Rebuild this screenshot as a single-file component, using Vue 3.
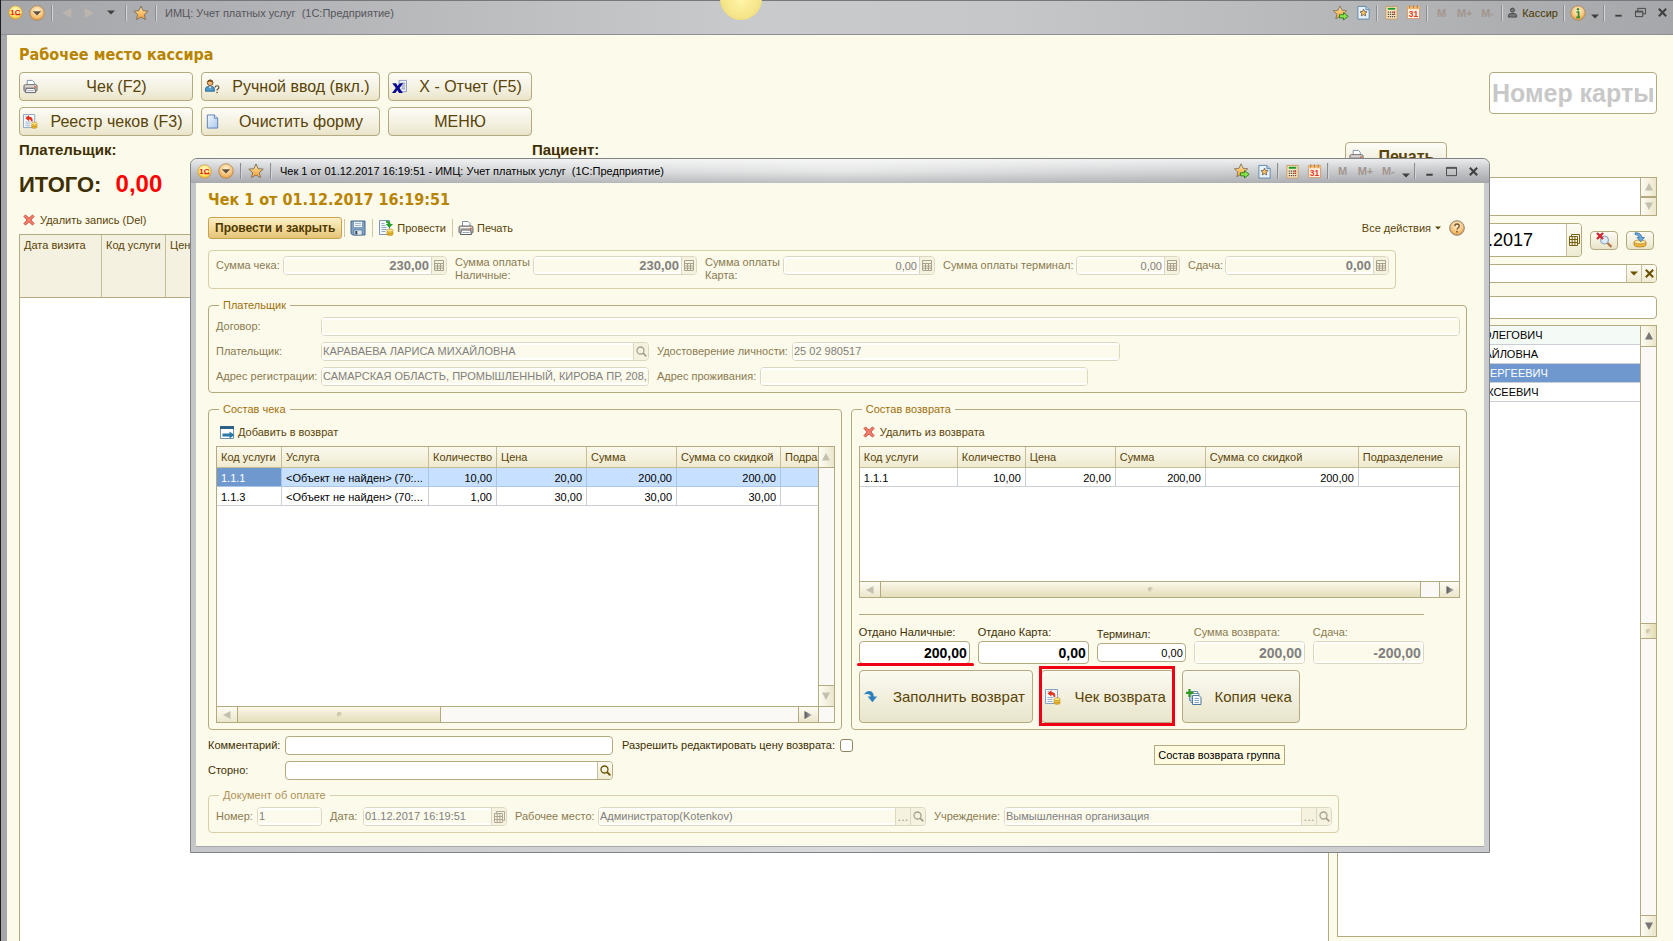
<script setup>
import { ref } from 'vue'

const mainButtons = [
  { icon: 'printer', text: 'Чек (F2)' },
  { icon: 'person', text: 'Ручной ввод (вкл.)' },
  { icon: 'xls', text: 'Х - Отчет (F5)' },
  { icon: 'registry', text: 'Реестр чеков (F3)' },
  { icon: 'blank', text: 'Очистить форму' },
  { icon: '', text: 'МЕНЮ' },
]

const visitColumns = [
  { name: 'Дата визита', width: 82 },
  { name: 'Код услуги', width: 64 },
  { name: 'Цена', width: 90 },
  { name: '', width: null },
]

const people = [
  { name: 'ОЛЕГОВИЧ', indent: 145, state: 'first' },
  { name: 'МИХАЙЛОВНА', indent: 122, state: '' },
  { name: 'СЕРГЕЕВИЧ', indent: 144, state: 'active' },
  { name: 'АЛЕКСЕЕВИЧ', indent: 127, state: '' },
]

const sums = [
  { id: 'sum-check', label: ['Сумма чека:'], value: '230,00', bold: true },
  { id: 'sum-cash', label: ['Сумма оплаты', 'Наличные:'], value: '230,00', bold: true },
  { id: 'sum-card', label: ['Сумма оплаты', 'Карта:'], value: '0,00', bold: false },
  { id: 'sum-term', label: ['Сумма оплаты терминал:'], value: '0,00', bold: false },
  { id: 'sum-change', label: ['Сдача:'], value: '0,00', bold: true },
]

const checkTable = {
  columns: [
    { name: 'Код услуги', width: 65 },
    { name: 'Услуга', width: 147 },
    { name: 'Количество', width: 68, num: true },
    { name: 'Цена', width: 90, num: true },
    { name: 'Сумма', width: 90, num: true },
    { name: 'Сумма со скидкой', width: 104, num: true },
    { name: 'Подразделение', width: null },
  ],
  rows: [
    ['1.1.1', '<Объект не найден> (70:...', '10,00', '20,00', '200,00', '200,00', ''],
    ['1.1.3', '<Объект не найден> (70:...', '1,00', '30,00', '30,00', '30,00', ''],
  ],
}

const returnTable = {
  columns: [
    { name: 'Код услуги', width: 98 },
    { name: 'Количество', width: 68, num: true },
    { name: 'Цена', width: 90, num: true },
    { name: 'Сумма', width: 90, num: true },
    { name: 'Сумма со скидкой', width: 153, num: true },
    { name: 'Подразделение', width: null },
  ],
  rows: [['1.1.1', '10,00', '20,00', '200,00', '200,00', '']],
}

const payments = [
  { id: 'pay-cash', label: 'Отдано Наличные:', value: '200,00', marked: true },
  { id: 'pay-card', label: 'Отдано Карта:', value: '0,00' },
  { id: 'pay-term', label: 'Терминал:', value: '0,00', small: true },
  { id: 'pay-return', label: 'Сумма возврата:', value: '200,00', disabled: true },
  { id: 'pay-change', label: 'Сдача:', value: '-200,00', disabled: true },
]

const comment = ref('')
const storno = ref('')
const allowEdit = ref(false)
const colStyle = (c) => (c.width ? { width: c.width + 'px' } : null)
</script>

<template>
  <div class="app">
    <svg class="defs" aria-hidden="true">
      <defs>
        <radialGradient id="gOrange" cx="50%" cy="35%" r="65%">
          <stop offset="0" stop-color="#fff3dc" /><stop offset="0.6" stop-color="#f8c880" /><stop offset="1" stop-color="#e79a3c" />
        </radialGradient>
        <radialGradient id="gYellow" cx="50%" cy="35%" r="65%">
          <stop offset="0" stop-color="#fffbd0" /><stop offset="0.7" stop-color="#fde35a" /><stop offset="1" stop-color="#eba92c" />
        </radialGradient>
        <linearGradient id="gStar" x1="0" y1="0" x2="0" y2="1">
          <stop offset="0" stop-color="#ffe9b0" /><stop offset="1" stop-color="#f59a28" />
        </linearGradient>
        <linearGradient id="gPage" x1="0" y1="0" x2="1" y2="1">
          <stop offset="0" stop-color="#f4f9ff" /><stop offset="1" stop-color="#a9c8ee" />
        </linearGradient>
        <linearGradient id="gArrow" x1="0" y1="0" x2="1" y2="0">
          <stop offset="0" stop-color="#555" /><stop offset="1" stop-color="#bbb" />
        </linearGradient>
        <symbol id="logo" viewBox="0 0 16 16">
          <circle cx="8" cy="8" r="7.2" fill="url(#gYellow)" stroke="#c9955a" stroke-width="0.8" />
          <text x="7.8" y="11" text-anchor="middle" font-family="Liberation Sans, sans-serif" font-weight="bold" font-size="8.5" fill="#e0201a">1C</text>
          <path d="M8 10.3h5.2" stroke="#e0201a" stroke-width="1.2" />
        </symbol>
        <symbol id="drop" viewBox="0 0 16 16">
          <circle cx="8" cy="8" r="7.3" fill="url(#gOrange)" stroke="#a8845c" stroke-width="0.8" />
          <path d="M3.8 6.2h8.4L8 10.6z" fill="#5f5040" />
        </symbol>
        <symbol id="star" viewBox="0 0 16 16">
          <path d="M8 1l2.1 4.7 5.1.5-3.9 3.4 1.2 5L8 12l-4.5 2.6 1.2-5L.8 6.2l5.1-.5z" fill="url(#gStar)" stroke="#85765e" stroke-width="1" />
        </symbol>
        <symbol id="stargo" viewBox="0 0 16 16">
          <path d="M7 .8l2 4.5 4.8.5-3.6 3.2 1.1 4.8L7 11.4l-4.2 2.4 1.1-4.8L.3 5.8l4.8-.5z" fill="url(#gStar)" stroke="#85765e" stroke-width="0.9" />
          <path d="M6.5 9.7h4V7.6l4.700 3.700-4.700 3.700v-2.100h-4z" fill="#8be04c" stroke="#2c7a1e" stroke-width="0.900" />
        </symbol>
        <symbol id="docstar" viewBox="0 0 16 16">
          <path d="M2 1.5h8.5L14 5v10H2z" fill="#e9f2fa" stroke="#5c87ac" />
          <path d="M10.5 1.5V5H14" fill="#b7cfe4" stroke="#5c87ac" />
          <path d="M8 4.4l1.1 2.5 2.7.3-2 1.8.6 2.7L8 10.3l-2.4 1.4.6-2.7-2-1.8 2.7-.3z" fill="#fbc15c" stroke="#5e5340" stroke-width="0.8" />
        </symbol>
        <symbol id="calc" viewBox="0 0 16 16">
          <path d="M2 1.5h12v13.500H2z" fill="#fbe6c2" stroke="#c79a62" />
          <path d="M4 4h8" stroke="#1b9a2a" stroke-width="2" />
          <path d="M4 7.500h8M4 10h8M4 12.500h8" stroke="#5d5044" stroke-width="1.300" stroke-dasharray="1.400 0.800" />
          <path d="M10.8 6.800v1.400M10.8 9.300v1.400" stroke="#d6251c" stroke-width="1.600" />
        </symbol>
        <symbol id="cal31" viewBox="0 0 16 16">
          <path d="M1.5 1.5h13v13h-13z" fill="#fdf1e0" stroke="#d09a6e" />
          <path d="M1.5 1.5h13v3h-13z" fill="#f5bb74" />
          <path d="M4 .5v3M8 .5v3M12 .5v3" stroke="#a87440" />
          <text x="8" y="13" text-anchor="middle" font-family="Liberation Sans, sans-serif" font-weight="bold" font-size="9" fill="#e8382a">31</text>
        </symbol>
        <symbol id="user" viewBox="0 0 12 12">
          <circle cx="6" cy="3.4" r="2.2" fill="#777" stroke="#444" />
          <path d="M1.5 11V9.2Q1.5 7.5 4 7.2h4q2.5.3 2.5 2V11z" fill="#777" stroke="#444" />
        </symbol>
        <symbol id="info" viewBox="0 0 16 16">
          <circle cx="8" cy="8" r="7.2" fill="url(#gOrange)" stroke="#a8845c" stroke-width="0.8" />
          <circle cx="8" cy="4.2" r="1.2" fill="#2f8c2a" />
          <path d="M6.5 7H8.6v5M6.3 12.3h3.8" stroke="#2f8c2a" stroke-width="1.7" fill="none" />
        </symbol>
        <symbol id="help" viewBox="0 0 16 16">
          <circle cx="8" cy="8" r="7.3" fill="url(#gOrange)" stroke="#8d8078" stroke-width="1" />
          <path d="M5.8 6.2q0-2.2 2.2-2.2t2.2 2Q10.200 7.200 9 8q-1 .6-1 1.500" stroke="#7a5630" stroke-width="1.400" fill="none" />
          <circle cx="8" cy="11.700" r="0.900" fill="#7a5630" />
        </symbol>
        <symbol id="printer" viewBox="0 0 16 16">
          <path d="M4.500 6V1.500h5.500l2 2V6" fill="#fff" stroke="#7b8fa6" />
          <path d="M1 7.500Q1 6 2.500 6h11Q15 6 15 7.500V12q0 1-1 1H2q-1 0-1-1z" fill="#bdb8b3" stroke="#6e6a68" />
          <path d="M2 7.500h12" stroke="#f3f1ee" />
          <path d="M3.500 10h9l1 4.500h-11z" fill="#fff" stroke="#5f5f66" />
          <path d="M4.500 12.500h7" stroke="#9ba6b4" />
          <path d="M12 8.500h1.500" stroke="#d94b2b" stroke-width="1.400" />
        </symbol>
        <symbol id="person" viewBox="0 0 16 16">
          <circle cx="5.500" cy="4" r="3" fill="#f3b877" stroke="#6b4421" />
          <path d="M2.800 3.300Q3 .8 5.600.8t2.800 2.700Q6 3.600 5 2.300q-.8 1-2.200 1z" fill="#7a4a1c" />
          <path d="M.5 13V10.500Q.5 8 4 8h3q3 0 3 2.500V13z" fill="#4f9ac9" stroke="#2d6894" />
          <path d="M4 8l1.500 2L7 8z" fill="#fff" />
          <path d="M10.800 9q0-1.800 2-1.800T14.800 9q0 1-1.100 1.700-.9.5-.9 1.500" stroke="#5b4a30" stroke-width="1.200" fill="none" />
          <circle cx="12.800" cy="14.300" r="0.800" fill="#5b4a30" />
        </symbol>
        <symbol id="xls" viewBox="0 0 16 16">
          <path d="M7.500 1.500h8v12h-8z" fill="#eef1fa" stroke="#8e96bd" />
          <path d="M10 4.500h4M10 6.500h4M10 8.500h4M10 10.500h4" stroke="#8289b2" />
          <path d="M.3 4.500h4l1.900 3 2-3H12L8 9.600l3.600 5.400H7.500l-1.800-3-2 3H0l4-5.400z" fill="#0a0a8c" />
        </symbol>
        <symbol id="registry" viewBox="0 0 16 16">
          <path d="M.5.5h12v14H.5z" fill="#f7fafd" stroke="#8aa3c0" />
          <path d="M2.500 8.500h6M2.500 10.500h5M2.500 12.500h5M2.500 2.500h2" stroke="#9eb4ce" />
          <path d="M2.500 4.400L6.500 1v2Q10.800 3.200 10.300 8H8.800Q8.800 5.800 6.500 5.600V7.600z" fill="#e3301c" />
          <ellipse cx="12" cy="13.800" rx="3.200" ry="1.500" fill="#e9b427" stroke="#b98a20" stroke-width="0.600" />
          <ellipse cx="12" cy="12" rx="3.200" ry="1.500" fill="#f2c83d" stroke="#b98a20" stroke-width="0.600" />
          <ellipse cx="12" cy="10.200" rx="3.200" ry="1.500" fill="#ffe67d" stroke="#b98a20" stroke-width="0.600" />
        </symbol>
        <symbol id="post" viewBox="0 0 16 16">
          <path d="M1.500.5h10v14h-10z" fill="#f5f8fc" stroke="#7d96b4" />
          <path d="M3.500 3.500h3M3.500 5.500h4M3.500 7.500h5M3.500 9.500h5M3.500 11.500h4" stroke="#8ea8c6" />
          <path d="M8 .8q4-.3 4.500 3.200H15l-3.700 4L7.700 4H10Q9.500 2.500 8 2.500z" fill="#23a02a" />
          <ellipse cx="12" cy="13.900" rx="3.200" ry="1.500" fill="#e9b427" stroke="#b98a20" stroke-width="0.600" />
          <ellipse cx="12" cy="12.200" rx="3.200" ry="1.500" fill="#f2c83d" stroke="#b98a20" stroke-width="0.600" />
          <ellipse cx="12" cy="10.500" rx="3.200" ry="1.500" fill="#ffe67d" stroke="#b98a20" stroke-width="0.600" />
        </symbol>
        <symbol id="blank" viewBox="0 0 16 16">
          <path d="M2.500 1h7.500l3.500 3.500V15h-11z" fill="url(#gPage)" stroke="#5b7fb5" />
          <path d="M10 1v3.500h3.500" fill="#dfeafa" stroke="#5b7fb5" />
        </symbol>
        <symbol id="cross" viewBox="0 0 12 12">
          <path d="M1 2.500L2.500 1 6 4.300 9.500 1 11 2.500 7.800 6 11 9.500 9.500 11 6 7.800 2.500 11 1 9.500 4.200 6z" fill="#f4836f" stroke="#cf4538" />
        </symbol>
        <symbol id="floppy" viewBox="0 0 16 16">
          <path d="M1 1h14v14H2.500L1 13.500z" fill="#7fa3c4" stroke="#47698c" />
          <path d="M3.500 1.500h9v6h-9z" fill="#eef4f9" stroke="#5b7f9f" stroke-width="0.600" />
          <path d="M5 3.500h6M5 5.500h6" stroke="#9fb8cc" />
          <path d="M4 10h8v5H4z" fill="#e3e8ec" stroke="#47698c" stroke-width="0.600" />
          <path d="M5.300 11h2v3.500h-2z" fill="#2f4a66" />
        </symbol>
        <symbol id="addret" viewBox="0 0 16 16">
          <path d="M1.500 2.500h13v12h-13z" fill="#fff" stroke="#7492a8" />
          <path d="M1 2h14v3H1z" fill="#2c6184" />
          <path d="M3.500 9.500h7V7.500l5 3.500-5 3.500v-2h-7z" fill="#2b79a6" />
        </symbol>
        <symbol id="minicalc" viewBox="0 0 10 11">
          <path d="M.5.5h9v10h-9zM.5 3.500h9M.5 6h9M.5 8.200h9M3.500 3.500v7M6.500 3.500v7" fill="none" stroke="currentColor" />
        </symbol>
        <symbol id="minical" viewBox="0 0 11 12">
          <path d="M2.500 2V.5h8v9H9M.5 2.500h8v9h-8zM.5 5.500h8M.5 8.500h8M3.200 2.500v9M5.900 2.500v9" fill="none" stroke="currentColor" stroke-width="0.900" />
        </symbol>
        <symbol id="lens" viewBox="0 0 11 11">
          <circle cx="4.500" cy="4.500" r="3.500" fill="none" stroke="currentColor" stroke-width="1.300" />
          <path d="M7 7l3.300 3.300" stroke="currentColor" stroke-width="1.800" />
        </symbol>
        <symbol id="lensx" viewBox="0 0 16 16">
          <circle cx="8.500" cy="8" r="4" fill="#dcebf8" stroke="#8a9bb0" />
          <path d="M11.500 11l4 4" stroke="#b5764e" stroke-width="2.400" />
          <path d="M1 1l6 6M7 1L1 7" stroke="#d3202a" stroke-width="2.200" />
        </symbol>
        <symbol id="opendb" viewBox="0 0 16 16">
          <path d="M2 10v3q0 2 6 2t6-2v-3z" fill="#efb83c" stroke="#a87a22" stroke-width="0.700" />
          <ellipse cx="8" cy="10" rx="6" ry="2" fill="#ffe9a0" stroke="#a87a22" stroke-width="0.700" />
          <path d="M3 .8q6-.6 7 4.700h2.500L8.800 9.800 5 5.500h2.300Q6.500 2.500 3 2.500z" fill="#69a9dd" stroke="#2a6399" stroke-width="0.700" />
        </symbol>
        <symbol id="fill" viewBox="0 0 16 16">
          <path d="M1 5.500Q5 .2 9.500 3q2 1.500 2 5H15l-5 6-5-6h3.200Q8.300 4.300 1 5.500z" fill="#2d7fbe" />
        </symbol>
        <symbol id="copyplus" viewBox="0 0 16 16">
          <path d="M3.500 2.500h8v9h-8z" fill="#fff" stroke="#6d8fae" />
          <path d="M5 4.500h8v9H5z" fill="#fff" stroke="#6d8fae" />
          <path d="M6.500 6.500H13l2 2v7H6.500z" fill="#f4f8fc" stroke="#52789a" />
          <path d="M8.500 9.500H13M8.500 11.500H13M8.500 13.500H13" stroke="#89a5bf" />
          <path d="M3.500 0v8M0 3.800h7.500" stroke="#2f9b1e" stroke-width="2.200" />
        </symbol>
        <symbol id="minimize" viewBox="0 0 12 12"><path d="M2.500 9.500h7" stroke="currentColor" stroke-width="2" /></symbol>
        <symbol id="restore" viewBox="0 0 12 12"><path d="M3 4.500V1.500h8.500v6H8.500M.5 4.500h8v6h-8zM.5 5.500h8" fill="none" stroke="currentColor" /></symbol>
        <symbol id="maximize" viewBox="0 0 12 12"><path d="M.5 1.500h11v9H.5zM.5 2.500h11" fill="none" stroke="currentColor" /></symbol>
        <symbol id="close" viewBox="0 0 12 12"><path d="M2 2l8 8M10 2l-8 8" stroke="currentColor" stroke-width="2.300" /></symbol>
        <symbol id="caret" viewBox="0 0 8 5"><path d="M0 .5h8L4 4.500z" fill="currentColor" /></symbol>
        <symbol id="triUp" viewBox="0 0 8 8"><path d="M4 0l4 7.500H0z" fill="currentColor" /></symbol>
        <symbol id="triDown" viewBox="0 0 8 8"><path d="M4 8L0 .5h8z" fill="currentColor" /></symbol>
        <symbol id="triLeft" viewBox="0 0 8 8"><path d="M0 4l7.500-4v8z" fill="currentColor" /></symbol>
        <symbol id="triRight" viewBox="0 0 8 8"><path d="M8 4L.5 0v8z" fill="currentColor" /></symbol>
        <symbol id="triRightG" viewBox="0 0 8 8"><path d="M8 4L.5 0v8z" fill="url(#gArrow)" /></symbol>
      </defs>
    </svg>

    <header class="titlebar">
      <span class="glow"></span>
      <button class="tb" aria-label="1С"><svg class="i15"><use href="#logo" /></svg></button>
      <button class="tb" aria-label="Главное меню"><svg class="i16"><use href="#drop" /></svg></button>
      <i class="tsep"></i>
      <button class="tb faded" aria-label="Назад"><svg class="i10"><use href="#triLeft" /></svg></button>
      <button class="tb faded" aria-label="Вперед"><svg class="i10"><use href="#triRight" /></svg></button>
      <button class="tb" aria-label="История"><svg class="car"><use href="#caret" /></svg></button>
      <i class="tsep"></i>
      <button class="tb" aria-label="Избранное"><svg class="i16"><use href="#star" /></svg></button>
      <i class="tsep"></i>
      <span class="ttext">ИМЦ: Учет платных услуг&nbsp; (1С:Предприятие)</span>
      <span class="grow"></span>
      <button class="tb" aria-label="Добавить в избранное"><svg class="i16"><use href="#stargo" /></svg></button>
      <button class="tb" aria-label="Ссылка"><svg class="i15"><use href="#docstar" /></svg></button>
      <i class="tsep"></i>
      <button class="tb" aria-label="Калькулятор"><svg class="i15"><use href="#calc" /></svg></button>
      <button class="tb" aria-label="Календарь"><svg class="i15"><use href="#cal31" /></svg></button>
      <i class="tsep"></i>
      <button class="tb mem">M</button><button class="tb mem">M+</button><button class="tb mem">M-</button>
      <i class="tsep"></i>
      <button class="tb cashier"><svg class="i11"><use href="#user" /></svg>Кассир</button>
      <i class="tsep"></i>
      <button class="tb" aria-label="Информация"><svg class="i16"><use href="#info" /></svg></button>
      <button class="tb low" aria-label="Сервис"><svg class="car"><use href="#caret" /></svg></button>
      <i class="tsep"></i>
      <button class="tb" aria-label="Свернуть"><svg class="i11"><use href="#minimize" /></svg></button>
      <button class="tb" aria-label="Восстановить"><svg class="i11"><use href="#restore" /></svg></button>
      <button class="tb" aria-label="Закрыть"><svg class="i11"><use href="#close" /></svg></button>
    </header>

    <main class="main">
      <section class="left">
        <h1>Рабочее место кассира</h1>
        <div class="bigbtns">
          <button v-for="b in mainButtons" :key="b.text" class="big">
            <svg v-if="b.icon" class="i15"><use :href="'#' + b.icon" /></svg>
            <span>{{ b.text }}</span>
          </button>
        </div>
        <div class="payer"><span>Плательщик:</span><span>Пациент:</span></div>
        <div class="total">ИТОГО: <span class="red">0,00</span></div>
        <button class="flat del"><svg class="i12"><use href="#cross" /></svg>Удалить запись (Del)</button>
        <div class="visits">
          <table>
            <colgroup><col v-for="c in visitColumns" :key="c.name" :style="colStyle(c)" /></colgroup>
            <thead><tr><th v-for="c in visitColumns" :key="c.name">{{ c.name }}</th></tr></thead>
          </table>
        </div>
      </section>

      <aside class="right">
        <input class="card" aria-label="Номер карты" placeholder="Номер карты" />
        <button class="big print"><svg class="i15"><use href="#printer" /></svg><span>Печать</span></button>
        <div class="memo">
          <textarea aria-label="Примечание"></textarea>
          <div class="vbar pale">
            <button aria-label="Вверх"><svg class="i8"><use href="#triUp" /></svg></button>
            <button aria-label="Вниз"><svg class="i8"><use href="#triDown" /></svg></button>
          </div>
        </div>
        <div class="daterow">
          <div class="field datefield">
            <input aria-label="Дата" value="01.12.2017" />
            <button aria-label="Выбрать дату"><svg class="cal"><use href="#minical" /></svg></button>
          </div>
          <button class="small" aria-label="Очистить поиск"><svg class="i16"><use href="#lensx" /></svg></button>
          <button class="small" aria-label="Загрузить"><svg class="i16"><use href="#opendb" /></svg></button>
        </div>
        <div class="field combo">
          <input aria-label="Отбор" />
          <button aria-label="Список"><svg class="car"><use href="#caret" /></svg></button>
          <button aria-label="Очистить"><svg class="i11"><use href="#close" /></svg></button>
        </div>
        <div class="field search"><input aria-label="Поиск" /></div>
        <div class="list">
          <ul>
            <li v-for="p in people" :key="p.name" :class="p.state" :style="{ paddingLeft: p.indent + 'px' }">{{ p.name }}</li>
          </ul>
          <div class="vbar">
            <button aria-label="Вверх"><svg class="i8"><use href="#triUp" /></svg></button>
            <span class="track"><i class="thumb"><b></b></i></span>
            <button aria-label="Вниз"><svg class="i8"><use href="#triDown" /></svg></button>
          </div>
        </div>
      </aside>
    </main>

    <div class="dialog" role="dialog" aria-labelledby="dlg-title">
      <header class="titlebar dtitle">
        <button class="tb" aria-label="1С"><svg class="i15"><use href="#logo" /></svg></button>
        <button class="tb" aria-label="Главное меню"><svg class="i16"><use href="#drop" /></svg></button>
        <i class="tsep"></i>
        <button class="tb" aria-label="Избранное"><svg class="i16"><use href="#star" /></svg></button>
        <i class="tsep"></i>
        <span class="ttext">Чек 1 от 01.12.2017 16:19:51 - ИМЦ: Учет платных услуг&nbsp; (1С:Предприятие)</span>
        <span class="grow"></span>
        <button class="tb" aria-label="Добавить в избранное"><svg class="i16"><use href="#stargo" /></svg></button>
        <button class="tb" aria-label="Ссылка"><svg class="i15"><use href="#docstar" /></svg></button>
        <i class="tsep"></i>
        <button class="tb" aria-label="Калькулятор"><svg class="i15"><use href="#calc" /></svg></button>
        <button class="tb" aria-label="Календарь"><svg class="i15"><use href="#cal31" /></svg></button>
        <i class="tsep"></i>
        <button class="tb mem">M</button><button class="tb mem">M+</button><button class="tb mem">M-</button>
        <button class="tb low" aria-label="Сервис"><svg class="car"><use href="#caret" /></svg></button>
        <i class="tsep"></i>
        <button class="tb" aria-label="Свернуть"><svg class="i11"><use href="#minimize" /></svg></button>
        <button class="tb" aria-label="Развернуть"><svg class="i11"><use href="#maximize" /></svg></button>
        <button class="tb" aria-label="Закрыть"><svg class="i11"><use href="#close" /></svg></button>
      </header>

      <div class="body">
        <h2 id="dlg-title">Чек 1 от 01.12.2017 16:19:51</h2>

        <div class="toolbar">
          <button class="primary">Провести и закрыть</button>
          <i class="vsep"></i>
          <button class="flat" aria-label="Записать"><svg class="i16"><use href="#floppy" /></svg></button>
          <i class="vsep"></i>
          <button class="flat"><svg class="i16"><use href="#post" /></svg>Провести</button>
          <i class="vsep"></i>
          <button class="flat"><svg class="i16"><use href="#printer" /></svg>Печать</button>
          <span class="grow"></span>
          <button class="flat actions">Все действия<svg class="car6"><use href="#caret" /></svg></button>
          <button class="flat" aria-label="Справка"><svg class="i16"><use href="#help" /></svg></button>
        </div>

        <div class="sums">
          <template v-for="s in sums" :key="s.id">
            <label :for="s.id" :class="{ two: s.label.length > 1 }"><span v-for="l in s.label" :key="l">{{ l }}</span></label>
            <div class="field off num" :class="{ strong: s.bold }">
              <input :id="s.id" :value="s.value" disabled />
              <button disabled aria-label="Калькулятор"><svg class="mc"><use href="#minicalc" /></svg></button>
            </div>
          </template>
        </div>

        <fieldset class="box payerbox">
          <legend>Плательщик</legend>
          <div class="row">
            <label class="l1" for="contract">Договор:</label>
            <div class="field off wide"><input id="contract" disabled /></div>
          </div>
          <div class="row">
            <label class="l1" for="payer">Плательщик:</label>
            <div class="field off std">
              <input id="payer" value="КАРАВАЕВА ЛАРИСА МИХАЙЛОВНА" disabled />
              <button disabled aria-label="Открыть"><svg class="i11"><use href="#lens" /></svg></button>
            </div>
            <label class="l2" for="passport">Удостоверение личности:</label>
            <div class="field off std"><input id="passport" value="25 02 980517" disabled /></div>
          </div>
          <div class="row">
            <label class="l1" for="reg">Адрес регистрации:</label>
            <div class="field off std"><input id="reg" value="САМАРСКАЯ ОБЛАСТЬ, ПРОМЫШЛЕННЫЙ, КИРОВА ПР, 208," disabled /></div>
            <label class="l3" for="live">Адрес проживания:</label>
            <div class="field off std"><input id="live" disabled /></div>
          </div>
        </fieldset>

        <div class="split">
          <fieldset class="box check">
            <legend>Состав чека</legend>
            <button class="flat cmd"><svg class="i16"><use href="#addret" /></svg>Добавить в возврат</button>
            <div class="grid">
              <div class="cells">
                <table>
                  <colgroup><col v-for="c in checkTable.columns" :key="c.name" :style="colStyle(c)" /></colgroup>
                  <thead><tr><th v-for="c in checkTable.columns" :key="c.name">{{ c.name }}</th></tr></thead>
                  <tbody>
                    <tr v-for="(r, i) in checkTable.rows" :key="r[0]" :class="{ sel: i === 0 }">
                      <td v-for="(v, j) in r" :key="j" :class="{ n: checkTable.columns[j].num }">{{ v }}</td>
                    </tr>
                  </tbody>
                </table>
              </div>
              <div class="vbar pale">
                <button aria-label="Вверх"><svg class="i8"><use href="#triUp" /></svg></button>
                <span class="track"></span>
                <button aria-label="Вниз"><svg class="i8"><use href="#triDown" /></svg></button>
              </div>
              <div class="hbar">
                <button class="dim" aria-label="Влево"><svg class="i8"><use href="#triLeft" /></svg></button>
                <span class="hthumb part"><b></b></span>
                <span class="grow"></span>
                <button class="last" aria-label="Вправо"><svg class="i8"><use href="#triRightG" /></svg></button>
              </div>
              <div class="corner"></div>
            </div>
          </fieldset>

          <fieldset class="box return">
            <legend>Состав возврата</legend>
            <button class="flat cmd"><svg class="i12"><use href="#cross" /></svg>Удалить из возврата</button>
            <div class="grid short">
              <div class="cells">
                <table>
                  <colgroup><col v-for="c in returnTable.columns" :key="c.name" :style="colStyle(c)" /></colgroup>
                  <thead><tr><th v-for="c in returnTable.columns" :key="c.name">{{ c.name }}</th></tr></thead>
                  <tbody>
                    <tr v-for="r in returnTable.rows" :key="r[0]">
                      <td v-for="(v, j) in r" :key="j" :class="{ n: returnTable.columns[j].num }">{{ v }}</td>
                    </tr>
                  </tbody>
                </table>
              </div>
              <div class="hbar">
                <button class="dim" aria-label="Влево"><svg class="i8"><use href="#triLeft" /></svg></button>
                <span class="hthumb grow"><b></b></span>
                <span class="gap"></span>
                <button class="last" aria-label="Вправо"><svg class="i8"><use href="#triRightG" /></svg></button>
              </div>
            </div>
            <hr />
            <div class="pays">
              <div v-for="p in payments" :key="p.id" class="pay" :class="{ tiny: p.small, muted: p.disabled }">
                <label :for="p.id">{{ p.label }}</label>
                <div class="field num" :class="{ off: p.disabled }"><input :id="p.id" :value="p.value" :disabled="p.disabled" /></div>
                <i v-if="p.marked" class="underline"></i>
              </div>
            </div>
            <div class="acts">
              <button class="act a1"><svg class="i15"><use href="#fill" /></svg><span>Заполнить возврат</span></button>
              <div class="marked"><button class="act a2"><svg class="i16"><use href="#registry" /></svg><span>Чек возврата</span></button></div>
              <button class="act a3"><svg class="i16"><use href="#copyplus" /></svg><span>Копия чека</span></button>
            </div>
          </fieldset>
        </div>

        <div class="foot">
          <label class="l0" for="comment">Комментарий:</label>
          <div class="field std"><input id="comment" v-model="comment" /></div>
          <label class="allow" for="allow">Разрешить редактировать цену возврата:</label>
          <input id="allow" v-model="allowEdit" type="checkbox" />
        </div>
        <div class="foot">
          <label class="l0" for="storno">Сторно:</label>
          <div class="field std">
            <input id="storno" v-model="storno" />
            <button aria-label="Открыть"><svg class="i11"><use href="#lens" /></svg></button>
          </div>
        </div>

        <fieldset class="box doc">
          <legend>Документ об оплате</legend>
          <label for="num">Номер:</label>
          <div class="field off"><input id="num" value="1" disabled /></div>
          <label for="date">Дата:</label>
          <div class="field off">
            <input id="date" value="01.12.2017 16:19:51" disabled />
            <button disabled aria-label="Календарь"><svg class="cal"><use href="#minical" /></svg></button>
          </div>
          <label for="place">Рабочее место:</label>
          <div class="field off">
            <input id="place" value="Администратор(Kotenkov)" disabled />
            <button disabled class="dots">...</button>
            <button disabled aria-label="Открыть"><svg class="i11"><use href="#lens" /></svg></button>
          </div>
          <label for="org">Учреждение:</label>
          <div class="field off">
            <input id="org" value="Вымышленная организация" disabled />
            <button disabled class="dots">...</button>
            <button disabled aria-label="Открыть"><svg class="i11"><use href="#lens" /></svg></button>
          </div>
        </fieldset>

        <div class="tip" role="tooltip">Состав возврата группа</div>
      </div>
    </div>
  </div>
</template>

<style>
body { margin: 0; overflow: hidden; }
</style>

<style scoped>
.app, .app * { box-sizing: border-box; }
.app {
  position: relative;
  display: flex;
  flex-direction: column;
  height: 100vh;
  padding-left: 6px;
  border-left: 1px solid #1c1c1c;
  background: #a6a7ab;
  font: 11px/14px "Liberation Sans", Arial, sans-serif;
  color: #4a3800;
  overflow: hidden;
}
.defs { position: absolute; width: 0; height: 0; }
svg { display: block; flex: none; }
button, input, textarea { font: inherit; color: inherit; margin: 0; padding: 0; border: 0; background: none; outline: none; border-radius: 0; }
button { white-space: nowrap; }
.i8 { width: 8px; height: 8px; }
.i10 { width: 10px; height: 10px; }
.i11 { width: 11px; height: 11px; }
.i12 { width: 12px; height: 12px; }
.i15 { width: 15px; height: 15px; }
.i16 { width: 16px; height: 16px; }
.car { width: 8px; height: 5px; }
.car6 { width: 6px; height: 4px; }
.cal { width: 11px; height: 12px; }
.mc { width: 10px; height: 11px; }
.grow { flex: 1; }

.titlebar {
  position: relative;
  display: flex;
  align-items: center;
  height: 35px;
  margin-left: -6px;
  padding: 0 0 10px 3px;
  border-top: 1px solid #77787b;
  border-bottom: 1px solid #8f9095;
  background: linear-gradient(90deg, #a5a6aa, #c9cacb 45%, #c6c7c8 60%, #a5a7aa);
  color: #404040;
}
.glow {
  position: absolute;
  left: 43%;
  top: -23px;
  width: 42px;
  height: 42px;
  border-radius: 50%;
  background: radial-gradient(circle, #fff6a8 0, #f5e58a 60%, #e6cf6e 92%, transparent 100%);
}
.tb { display: flex; align-items: center; justify-content: center; width: 22px; height: 22px; flex: none; }
.tb.faded { color: #bcb5ad; }
.tb.mem { width: 23px; font-weight: bold; color: #a3968e; }
.tb.cashier { width: auto; gap: 4px; padding: 0 3px 0 2px; color: #4a3800; }
.tb.low { width: 12px; padding-top: 8px; }
.tsep { width: 2px; height: 16px; margin: 0 3px; border-left: 1px solid #8b8c90; border-right: 1px solid #d4d5d6; flex: none; }
.grow ~ .tsep { margin: 0 2px; }
.ttext { margin-left: 5px; white-space: nowrap; color: #55565a; }

.main { flex: 1; display: flex; gap: 8px; min-height: 0; padding: 0 16px 4px 12px; background: #fcfaeb; }
.left { flex: 1; min-width: 0; display: flex; flex-direction: column; align-items: flex-start; margin-bottom: -4px; }
h1, h2 { margin: 9px 0 6px; font: bold 16px/22px "DejaVu Sans Condensed", "Open Sans", sans-serif; color: #b88400; }
.bigbtns { display: grid; grid-template-columns: 174px 179px 144px; grid-auto-rows: 29px; gap: 6px 8px; }
.big, .act {
  display: flex;
  align-items: center;
  border: 1px solid #b3aa80;
  border-radius: 4px;
  background: linear-gradient(#fdfcf6, #f3f0e0 60%, #e9e4c8);
  padding: 0 3px;
  font-size: 16px;
  line-height: 20px;
  color: #5a4407;
}
.big span { flex: 1; text-align: center; }
.big svg + span { padding-left: 6px; }
.payer { display: grid; grid-template-columns: 513px auto; margin-top: 4px; font: bold 15px/20px "Liberation Sans", Arial, sans-serif; color: #3e2f00; }
.total { margin-top: 10px; font: bold 22px/28px "Liberation Sans", Arial, sans-serif; color: #3e2f00; }
.total .red { margin-left: 8px; font-size: 24px; color: #f00; }
.flat { display: flex; align-items: center; gap: 3px; height: 20px; color: #5a4407; }
.del { gap: 5px; margin: 11px 0 4px 4px; }
.visits { flex: 1; align-self: stretch; border: 1px solid #b3aa80; border-bottom: 0; background: #fff; }
table { width: 100%; border-collapse: separate; border-spacing: 0; table-layout: fixed; }
th, td { overflow: hidden; white-space: nowrap; text-align: left; font-weight: normal; padding: 0 4px; border-right: 1px solid #c5bd95; }
th:last-child, td:last-child { border-right: 0; }
.visits th { height: 63px; padding-top: 3px; vertical-align: top; border-bottom: 1px solid #b3aa80; background: #f4f1e0; color: #5a4407; }

.right { width: 320px; display: flex; flex-direction: column; }
.card {
  align-self: flex-end;
  width: 168px;
  height: 42px;
  margin-top: 37px;
  padding: 0 2px;
  border: 1px solid #b3aa80;
  border-radius: 4px;
  background: #fff;
  font: bold 25px/30px "Liberation Sans", Arial, sans-serif;
}
.card::placeholder { color: #c8c8c8; opacity: 1; }
.print { width: 102px; height: 29px; margin: 28px 0 0 8px; font-weight: bold; }
.memo { display: flex; height: 39px; margin-top: 6px; border: 1px solid #b3aa80; background: #fff; }
.memo textarea { flex: 1; min-width: 0; resize: none; }
.memo .vbar button { flex: 1; }
.daterow { display: flex; align-items: center; gap: 8px; height: 34px; margin: 7px 3px 0 0; }
.field { display: flex; height: 19px; min-width: 0; border: 1px solid #b3aa80; border-radius: 4px; background: #fff; overflow: hidden; color: #000; }
.field input { flex: 1; min-width: 0; width: 0; padding: 0 2px; }
.field button { display: flex; align-items: center; justify-content: center; width: 15px; border-left: 1px solid #c8c09c; background: linear-gradient(#fdfcf4, #efebd2); color: #6b5200; }
.field.off { border-color: #dcd7c0; background: #fcfaeb; color: #808080; }
.field.off input { border: solid #fff; border-width: 2px 0 2px 1px; padding: 0; }
.field.num input { text-align: right; }
.field.off.num input { border-right-width: 2px; }
.field.off button { border-color: #dcd7c0; background: #f5f2e0; color: #a8a28c; }
.field.strong input { font-size: 13px; font-weight: bold; }
.datefield { margin-left: auto; width: 146px; height: 34px; }
.datefield input { padding-left: 6px; font-size: 18px; }
.small { display: flex; align-items: center; justify-content: center; width: 28px; height: 19px; border: 1px solid #b3aa80; border-radius: 4px; background: linear-gradient(#fdfcf6, #e9e4c8); }
.combo { margin-top: 7px; }
.search { height: 23px; margin-top: 13px; }
.list { flex: 1; display: flex; min-height: 0; margin-top: 6px; border: 1px solid #b3aa80; background: #fff; color: #000; }
.list ul { flex: 1; margin: 0; padding: 0; list-style: none; }
.list li { height: 19px; line-height: 18px; border-bottom: 1px solid #c9cfd4; white-space: nowrap; }
.list li.first { background: #f4fbf6; }
.list li.active { background: #6f98cf; color: #fff; }

.vbar { display: flex; flex-direction: column; width: 16px; border-left: 1px solid #b3aa80; background: #faf9f5; color: #777; }
.vbar.pale, .dim { color: #c4c0b0; }
.vbar button { display: flex; align-items: center; justify-content: center; height: 21px; background: linear-gradient(90deg, #fdfcf4, #ebe6cb); border-bottom: 1px solid #b3aa80; }
.vbar button:last-child { border-bottom: 0; border-top: 1px solid #b3aa80; }
.track { flex: 1; display: flex; align-items: center; }
.thumb { display: flex; align-items: center; justify-content: center; width: 100%; height: 16px; border: 1px solid #b3aa80; border-width: 1px 0; background: linear-gradient(90deg, #fbf9ea, #e2dcb4); }
.thumb b, .hthumb b { width: 5px; height: 5px; border-radius: 50%; background: linear-gradient(135deg, #b5ae90, #f6f2da); }

.dialog {
  position: absolute;
  left: 189px;
  right: 183px;
  top: 158px;
  border: 1px solid #808284;
  border-radius: 7px 7px 0 0;
  background: linear-gradient(90deg, #c4c6c9, #d9dadb 50%, #c9cbce);
  padding: 0 5px 5px;
  overflow: hidden;
}
.dtitle {
  height: 24px;
  margin: 0 -5px;
  padding: 0 5px 0 2px;
  border: 0;
  background: linear-gradient(rgba(255, 255, 255, 0.7), rgba(255, 255, 255, 0.1) 50%, rgba(120, 122, 126, 0.35)), linear-gradient(90deg, #bfc1c5, #e4e5e5 50%, #bbbdc1);
}
.dtitle .ttext { color: #000; }
.body { position: relative; padding: 6px 17px 13px 12px; background: #fcfaeb; border-bottom: 1px solid #a6a8ab; }
h2 { margin: 0 0 6px; }
.toolbar { display: flex; align-items: center; height: 22px; margin-right: 2px; }
.primary { height: 22px; padding: 0 6px; border: 1px solid #c9a24e; border-radius: 3px; background: linear-gradient(#fdf0c8, #f0d795 60%, #e4c478); font-size: 12px; font-weight: bold; color: #4e3900; }
.vsep { width: 1px; height: 18px; margin: 0 5px 0 2px; background: #cfc7a4; }
.toolbar .flat + .vsep { margin-left: 6px; }
.actions { margin-right: 8px; gap: 4px; }
.sums {
  display: grid;
  grid-template-columns: 67px 164px 86px 164px 86px 152px 141px 104px 45px 164px;
  width: max-content;
  height: 39px;
  margin-top: 11px;
  padding: 5px 6px 0 7px;
  border: 1px solid #d6cfa8;
  border-radius: 4px;
  color: #8a7a50;
}
.sums label { line-height: 19px; white-space: nowrap; padding-left: 8px; }
.sums label:first-child { padding-left: 0; }
.sums label.two { line-height: 13px; }
.sums label span { display: block; }
.box { min-width: 0; margin: 9px 0 0; padding: 5px 6px 6px 7px; border: 1px solid #b3aa80; border-radius: 4px; }
.box legend { margin-left: 3px; padding: 0 4px; line-height: 14px; color: #a0700c; }
.row { display: flex; line-height: 19px; color: #8a7a50; }
.row + .row { margin-top: 6px; }
.row .wide { flex: 1; }
.std { width: 328px; }
.l1 { width: 105px; }
.l2 { width: 143px; padding-left: 8px; }
.l3 { width: 111px; padding-left: 8px; }
.split { display: flex; gap: 9px; }
.check { flex: 634 1 0; display: flex; flex-direction: column; }
.return { flex: 616 1 0; }
.cmd { margin: 1px 0 4px 3px; }
.return .cmd { gap: 5px; margin-left: 4px; }
.grid { flex: 1; display: grid; grid-template-columns: minmax(0, 1fr) 16px; grid-template-rows: 1fr 16px; border: 1px solid #b3aa80; background: #fff; }
.grid.short { grid-template-columns: minmax(0, 1fr); height: 152px; }
.grid th { height: 21px; line-height: 20px; border-bottom: 1px solid #c5bd95; background: linear-gradient(#fbf9ee, #efeacf); color: #5a4407; }
.grid td { height: 19px; line-height: 16px; padding-top: 2px; border-color: #c9cfd4; border-bottom: 1px solid #c9cfd4; color: #000; }
.grid td.n { text-align: right; }
.sel td { background: #c7e0ff; border-color: #a9c5e8; }
.sel td:first-child { background: #6f98cf; color: #fff; }
.hbar { display: flex; border-top: 1px solid #b3aa80; background: #faf9f5; }
.hbar button { display: flex; align-items: center; justify-content: center; width: 20px; background: linear-gradient(#fdfcf4, #ebe6cb); }
.hbar .last { border-left: 1px solid #b3aa80; }
.hthumb { display: flex; align-items: center; justify-content: center; border: 1px solid #b3aa80; border-width: 0 1px; background: linear-gradient(#fbf9ea, #efead0 50%, #e4dfba); }
.part { width: 34%; }
.gap { width: 18px; }
.corner { border-left: 1px solid #b3aa80; border-top: 1px solid #b3aa80; background: #faf9f5; }
hr { width: 565px; height: 1px; margin: 16px 0 10px; border: 0; background: #b3aa80; }
.pays { display: flex; align-items: center; gap: 8px; color: #3e2f00; }
.pay { position: relative; width: 111px; }
.pay label { display: block; margin-bottom: 2px; white-space: nowrap; }
.pay .field { height: 23px; }
.pay input { font-size: 14px; font-weight: bold; }
.pay.tiny { width: 89px; }
.pay.tiny .field { height: 19px; }
.pay.tiny input { font-size: 11px; font-weight: normal; }
.pay.muted { color: #8a7a50; }
.underline { position: absolute; left: -2px; right: -4px; bottom: -2px; height: 3px; border-radius: 2px; background: #f00014; }
.acts { display: flex; gap: 8px; margin-top: 6px; }
.act { height: 53px; padding: 0 7px 0 3px; font-size: 15px; background: linear-gradient(#fbfaf2, #f0edda 60%, #e9e5cb); }
.act span { flex: 1; text-align: right; }
.a1 { width: 174px; }
.a2 { width: 133px; }
.a3 { width: 118px; }
.marked { position: relative; }
.marked::after { content: ""; position: absolute; inset: -4px -1px -3px -2px; border: 3px solid #f00014; pointer-events: none; }
.foot { display: flex; line-height: 19px; margin-top: 6px; color: #3e2f00; }
.l0 { width: 77px; }
.allow { padding: 0 5px 0 9px; }
input[type="checkbox"] { appearance: none; width: 13px; height: 13px; margin-top: 3px; border: 1px solid #8f8660; border-radius: 3px; background: #fff; }
.doc { display: grid; grid-template-columns: 41px 65px 41px 144px 91px 328px 78px 328px; width: max-content; margin-top: 8px; border-color: #d6cfa8; line-height: 19px; color: #8a7a50; }
.doc legend { color: #ad9254; }
.doc label { padding-left: 8px; white-space: nowrap; }
.doc label:first-of-type { padding-left: 0; }
.field .dots { font-size: 13px; line-height: 13px; color: #8a8468; }
.tip { position: absolute; right: 199px; bottom: 81px; padding: 2px 4px 2px 3px; height: 20px; border: 1px solid #b3aa80; background: #fffbe0; color: #000; white-space: nowrap; }
</style>
